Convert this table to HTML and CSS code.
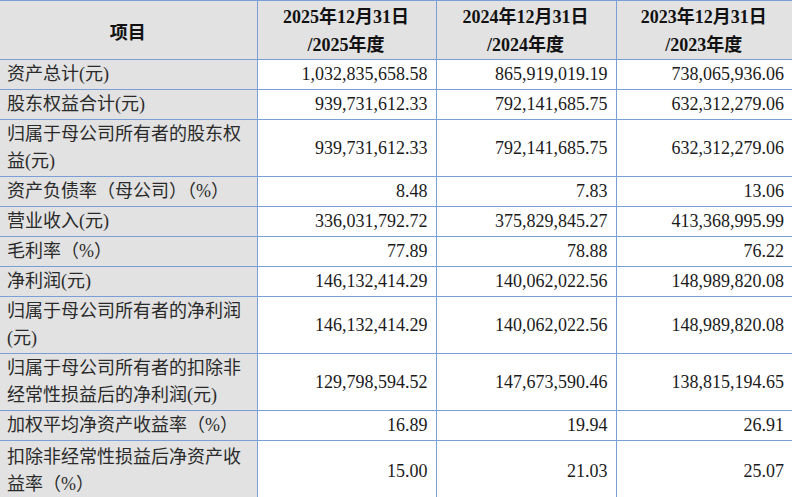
FILE: index.html
```html
<!DOCTYPE html>
<html lang="zh-CN">
<head>
<meta charset="utf-8">
<title>主要财务数据</title>
<link rel="stylesheet" href="styles.css">
</head>
<body>
<table class="fin">
  <colgroup>
    <col class="c-label">
    <col class="c-y1">
    <col class="c-y2">
    <col class="c-y3">
  </colgroup>
  <thead>
    <tr class="head">
      <th class="h-label">项目</th>
      <th>2025年12月31日<br>/2025年度</th>
      <th>2024年12月31日<br>/2024年度</th>
      <th>2023年12月31日<br>/2023年度</th>
    </tr>
  </thead>
  <tbody>
    <tr><td class="label">资产总计(元)</td><td>1,032,835,658.58</td><td>865,919,019.19</td><td>738,065,936.06</td></tr>
    <tr><td class="label">股东权益合计(元)</td><td>939,731,612.33</td><td>792,141,685.75</td><td>632,312,279.06</td></tr>
    <tr><td class="label">归属于母公司所有者的股东权益(元)</td><td>939,731,612.33</td><td>792,141,685.75</td><td>632,312,279.06</td></tr>
    <tr><td class="label">资产负债率（母公司）（%）</td><td>8.48</td><td>7.83</td><td>13.06</td></tr>
    <tr><td class="label">营业收入(元)</td><td>336,031,792.72</td><td>375,829,845.27</td><td>413,368,995.99</td></tr>
    <tr><td class="label">毛利率（%）</td><td>77.89</td><td>78.88</td><td>76.22</td></tr>
    <tr><td class="label">净利润(元)</td><td>146,132,414.29</td><td>140,062,022.56</td><td>148,989,820.08</td></tr>
    <tr><td class="label">归属于母公司所有者的净利润(元)</td><td>146,132,414.29</td><td>140,062,022.56</td><td>148,989,820.08</td></tr>
    <tr><td class="label">归属于母公司所有者的扣除非经常性损益后的净利润(元)</td><td>129,798,594.52</td><td>147,673,590.46</td><td>138,815,194.65</td></tr>
    <tr><td class="label">加权平均净资产收益率（%）</td><td>16.89</td><td>19.94</td><td>26.91</td></tr>
    <tr class="last"><td class="label">扣除非经常性损益后净资产收益率（%）</td><td>15.00</td><td>21.03</td><td>25.07</td></tr>
  </tbody>
</table>
</body>
</html>
```

FILE: styles.css
```css
html, body {
  margin: 0;
  padding: 0;
  background: #ffffff;
}

body {
  font-family: "Liberation Serif", "Noto Sans CJK SC", serif;
  font-size: 18px;
  color: #1a1a1a;
  overflow: hidden;
  height: 497px;
}

.fin {
  border-collapse: collapse;
  table-layout: fixed;
  width: 792px;
  border-top: 1.5px solid #7a9fd6;
}

.c-label { width: 257px; }
.c-y1 { width: 179px; }
.c-y2 { width: 180px; }
.c-y3 { width: 176px; }

.fin th,
.fin td {
  border: 1.5px solid #7a9fd6;
  padding: 1px 8px 1px 7px;
  line-height: 27px;
  vertical-align: middle;
}

.fin tr > :first-child { border-left: none; }
.fin tr > :last-child { border-right: none; }

.head th {
  background: #e2e2e2;
  font-weight: bold;
  color: #111111;
  text-align: center;
  line-height: 27.5px;
  padding-top: 3px;
  padding-bottom: 0;
  height: 55px;
}

.head th.h-label {
  padding-top: 8px;
  height: 50px;
}

.fin td {
  text-align: right;
  background: #ffffff;
  color: #1a1a1a;
}

.fin td.label {
  text-align: left;
  background: #e2e2e2;
  color: #2a2a2a;
  padding-left: 7px;
  padding-right: 4px;
}

.fin tr.last td {
  border-bottom: none;
  height: 58px;
  padding-top: 1px;
  padding-bottom: 1px;
}
```
